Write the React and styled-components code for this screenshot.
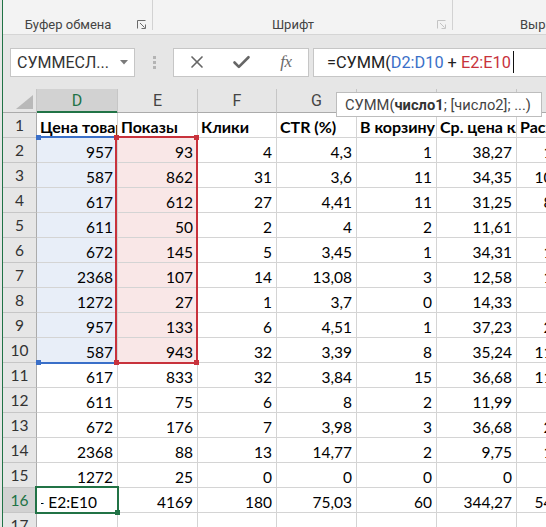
import React from 'react';
import styled, { createGlobalStyle } from 'styled-components';
import { X, Check } from 'lucide-react';

const Global = createGlobalStyle`
  html, body { margin: 0; padding: 0; background: #fff; overflow: hidden; }
  #root { width: 546px; height: 527px; }
`;

const COLS = [34, 81, 80, 79, 80, 80, 80, 80];
const LETTERS = ['D', 'E', 'F', 'G', 'H', 'I', 'J'];
const HEAD = ['Цена товара', 'Показы', 'Клики', 'CTR (%)', 'В корзину', 'Ср. цена клика', 'Расход'];
const DATA = [
  ['957', '93', '4', '4,3', '1', '38,27', '153,08'],
  ['587', '862', '31', '3,6', '11', '34,35', '1064,85'],
  ['617', '612', '27', '4,41', '11', '31,25', '843,75'],
  ['611', '50', '2', '4', '2', '11,61', '23,22'],
  ['672', '145', '5', '3,45', '1', '34,31', '171,55'],
  ['2368', '107', '14', '13,08', '3', '12,58', '176,12'],
  ['1272', '27', '1', '3,7', '0', '14,33', '14,33'],
  ['957', '133', '6', '4,51', '1', '37,23', '223,38'],
  ['587', '943', '32', '3,39', '8', '35,24', '1127,68'],
  ['617', '833', '32', '3,84', '15', '36,68', '1173,76'],
  ['611', '75', '6', '8', '2', '11,99', '71,94'],
  ['672', '176', '7', '3,98', '3', '36,68', '256,76'],
  ['2368', '88', '13', '14,77', '2', '9,75', '126,75'],
  ['1272', '25', '0', '0', '0', '0', '0'],
];
const TOTAL = ['4169', '180', '75,03', '60', '344,27', '5427,17'];

const UI_FONT = `"Roboto", "Noto Sans", sans-serif`;
const CELL_FONT = `"Lato", "Noto Sans", sans-serif`;

const Window = styled.div`
  width: 546px;
  height: 527px;
  overflow: hidden;
  background: #e6e6e6;
  padding-left: 2px;
  box-sizing: border-box;
  display: flex;
`;

const Frame = styled.div`
  flex: 1;
  min-width: 0;
  overflow: hidden;
  border-left: 1px solid #217346;
  display: flex;
  flex-direction: column;
  background: #e6e6e6;
`;

const Ribbon = styled.div`
  height: 35px;
  box-sizing: border-box;
  background: #f3f3f3;
  border-bottom: 1px solid #d5d5d5;
  display: flex;
  flex-shrink: 0;
`;

const Group = styled.div`
  width: ${p => p.$w}px;
  flex-shrink: 0;
  display: flex;
  align-items: flex-end;
  box-sizing: border-box;
  padding-left: ${p => p.$pad || 0}px;
`;

const GroupLabel = styled.div`
  flex: ${p => (p.$free ? '0 0 auto' : 1)};
  text-align: center;
  font: 13px ${UI_FONT};
  color: #444;
  line-height: 18px;
  white-space: nowrap;
`;

const Launcher = styled.svg`
  flex-shrink: 0;
  margin: 0 6px 5px 4px;
`;

const GroupSep = styled.div`
  width: 1px;
  height: 30px;
  background: #d2d2d2;
  flex-shrink: 0;
`;

const FormulaBar = styled.div`
  height: 54px;
  display: flex;
  align-items: center;
  padding-left: 7px;
  flex-shrink: 0;
`;

const Box = styled.div`
  height: 29px;
  box-sizing: border-box;
  background: #fff;
  border: 1px solid #c6c6c6;
  display: flex;
  align-items: center;
  flex-shrink: 0;
`;

const NameBox = styled(Box)`
  width: 125px;
  padding: 0 6px;
  font: 16px ${UI_FONT};
  color: #333;
`;

const NameText = styled.span`
  flex: 1;
  white-space: nowrap;
`;

const Grip = styled.div`
  display: flex;
  flex-direction: column;
  gap: 2px;
  margin: 0 17px 0 18px;
  span {
    width: 3px;
    height: 3px;
    background: #b4b4b4;
  }
`;

const ButtonBox = styled(Box)`
  width: 136px;
  padding-left: 1px;
`;

const IconSlot = styled.div`
  width: 45px;
  display: flex;
  justify-content: center;
  align-items: center;
  color: #666;
`;

const Fx = styled.span`
  font: italic 17px "Liberation Serif", "DejaVu Serif", serif;
  color: #6a6a6a;
  letter-spacing: -0.5px;
`;

const FormulaInput = styled(Box)`
  flex: 1;
  margin-left: 4px;
  margin-right: -20px;
  padding-left: 13px;
  font: 16.3px ${UI_FONT};
  color: #222;
  white-space: nowrap;
`;

const Ref = styled.span`
  color: ${p => p.$c};
`;

const Caret = styled.span`
  width: 1px;
  height: 22px;
  background: #111;
  margin-left: 2px;
`;

const Sheet = styled.div`
  position: relative;
  display: grid;
  grid-template-columns: ${COLS.map(c => c + 'px').join(' ')};
  grid-template-rows: 24px;
  grid-auto-rows: 25px;
  background: #fff;
  flex-shrink: 0;
  width: max-content;
`;

const ColHead = styled.div`
  box-sizing: border-box;
  background: ${p => (p.$active ? '#d2d2d2' : '#e6e6e6')};
  border-right: 1px solid #c6c6c6;
  border-bottom: 1px solid ${p => (p.$active ? '#217346' : '#ababab')};
  box-shadow: ${p => (p.$active ? 'inset 0 -1px 0 #217346' : 'none')};
  display: flex;
  align-items: center;
  justify-content: center;
  font: 16px ${UI_FONT};
  color: ${p => (p.$active ? '#217346' : '#444')};
`;

const Corner = styled(ColHead)`
  align-items: flex-end;
  justify-content: flex-end;
  padding: 0 3px 3px 0;
`;

const RowHead = styled.div`
  box-sizing: border-box;
  background: ${p => (p.$active ? '#d2d2d2' : '#e6e6e6')};
  border-right: 1px solid #ababab;
  border-bottom: 1px solid #c6c6c6;
  display: flex;
  align-items: center;
  justify-content: center;
  font: 15.5px ${CELL_FONT};
  color: ${p => (p.$active ? '#217346' : '#333')};
`;

const TONES = { blue: '#e8eef8', red: '#f9e7e7' };

const Cell = styled.div`
  box-sizing: border-box;
  border-right: 1px solid #d4d4d4;
  border-bottom: 1px solid #d4d4d4;
  background: ${p => TONES[p.$tone] || '#fff'};
  display: flex;
  align-items: flex-end;
  justify-content: ${p => (p.$num ? 'flex-end' : 'flex-start')};
  padding: 0 4px 1px 3px;
  overflow: hidden;
  white-space: nowrap;
  font: ${p => (p.$bold ? 700 : 400)} ${p => (p.$bold ? '16px' : '15.5px')} ${CELL_FONT};
  color: #000;
`;

const EditCell = styled(Cell)`
  padding-left: 4px;
  padding-right: 0;
`;

const EditClip = styled.div`
  flex: 1;
  min-width: 0;
  overflow: hidden;
  display: flex;
  justify-content: flex-end;
  padding-right: 20px;
`;

const RangeBox = styled.div`
  position: absolute;
  left: ${p => p.$x}px;
  top: ${p => p.$y}px;
  width: ${p => p.$w}px;
  height: ${p => p.$h}px;
  box-sizing: border-box;
  border: 2px solid ${p => p.$c};
  ${p => (p.$open ? 'border-left-color: transparent; border-right-color: transparent;' : '')}
  pointer-events: none;
`;

const Handle = styled.div`
  position: absolute;
  left: ${p => p.$x - 2.5}px;
  top: ${p => p.$y - 2.5}px;
  width: 5px;
  height: 5px;
  background: ${p => p.$c};
`;

const Tip = styled.div`
  position: absolute;
  left: 333px;
  top: 3px;
  width: 206px;
  height: 25px;
  box-sizing: border-box;
  background: #fff;
  border: 1px solid #bdbdbd;
  display: flex;
  align-items: center;
  padding-left: 8px;
  font: 14.7px ${UI_FONT};
  color: #444;
  white-space: nowrap;
  b { font-weight: 700; color: #333; }
`;

const LauncherIcon = ({ color }) => (
  <Launcher width="9" height="9" viewBox="0 0 9 9">
    <path d="M0.5 8.5V0.5H8.5" fill="none" stroke={color} strokeWidth="1" />
    <path d="M3 3L7.5 7.5" fill="none" stroke={color} strokeWidth="1" />
    <path d="M8.5 4.5V8.5H4.5" fill="none" stroke={color} strokeWidth="1" />
  </Launcher>
);

const BLUE = '#3a6fc8';
const RED = '#c8323c';

export default function App() {
  const rowsY = r => 24 + (r - 1) * 25;
  return (
    <Window>
      <Global />
      <Frame>
        <Ribbon>
          <Group $w={149}>
            <GroupLabel>Буфер обмена</GroupLabel>
            <LauncherIcon color="#6b6b6b" />
          </Group>
          <GroupSep />
          <Group $w={299}>
            <GroupLabel>Шрифт</GroupLabel>
            <LauncherIcon color="#c4c4c4" />
          </Group>
          <GroupSep />
          <Group $w={100} $pad={67}>
            <GroupLabel $free>Выравнивание</GroupLabel>
          </Group>
        </Ribbon>

        <FormulaBar>
          <NameBox>
            <NameText>СУММЕСЛ...</NameText>
            <svg width="8" height="5" viewBox="0 0 8 5">
              <path d="M0 0H8L4 4.5Z" fill="#7a7a7a" />
            </svg>
          </NameBox>
          <Grip>
            <span />
            <span />
            <span />
          </Grip>
          <ButtonBox>
            <IconSlot>
              <X size={20} strokeWidth={2} />
            </IconSlot>
            <IconSlot>
              <Check size={21} strokeWidth={3} />
            </IconSlot>
            <IconSlot>
              <Fx>fx</Fx>
            </IconSlot>
          </ButtonBox>
          <FormulaInput>
            =СУММ(<Ref $c={BLUE}>D2:D10</Ref>&nbsp;+&nbsp;<Ref $c={RED}>E2:E10</Ref>
            <Caret />
          </FormulaInput>
        </FormulaBar>

        <Sheet>
          <Corner>
            <svg width="17" height="14" viewBox="0 0 17 14">
              <path d="M17 0V14H0Z" fill="#b9b9b9" />
            </svg>
          </Corner>
          {LETTERS.map((l, i) => (
            <ColHead key={l} $active={i === 0}>
              {l}
            </ColHead>
          ))}

          <RowHead>1</RowHead>
          {HEAD.map(h => (
            <Cell key={h} $bold>
              {h}
            </Cell>
          ))}

          {DATA.map((row, ri) => (
            <React.Fragment key={ri}>
              <RowHead>{ri + 2}</RowHead>
              {row.map((v, ci) => (
                <Cell
                  key={ci}
                  $num
                  $tone={ri < 9 ? (ci === 0 ? 'blue' : ci === 1 ? 'red' : undefined) : undefined}
                >
                  {v}
                </Cell>
              ))}
            </React.Fragment>
          ))}

          <RowHead $active>16</RowHead>
          <EditCell>
            <EditClip>=СУММ(D2:D10 + E2:E10</EditClip>
          </EditCell>
          {TOTAL.map((v, i) => (
            <Cell key={i} $num>
              {v}
            </Cell>
          ))}

          <RowHead>17</RowHead>
          {LETTERS.map(l => (
            <Cell key={l} />
          ))}

          <RangeBox $x={34} $y={47} $w={80} $h={228} $c={BLUE} $open />
          <Handle $x={35.5} $y={48} $c={BLUE} />
          <Handle $x={35.5} $y={273.5} $c={BLUE} />
          <RangeBox $x={112} $y={47} $w={83} $h={228} $c={RED} />
          <Handle $x={113.5} $y={48} $c={RED} />
          <Handle $x={193.5} $y={48} $c={RED} />
          <Handle $x={113.5} $y={273.5} $c={RED} />
          <Handle $x={193.5} $y={273.5} $c={RED} />
          <RangeBox $x={32} $y={rowsY(16) - 2} $w={84} $h={28} $c="#217346" />
          <Handle $x={114} $y={rowsY(16) + 24} $c="#217346" />

          <Tip>
            СУММ(<b>число1</b>; [число2]; ...)
          </Tip>
        </Sheet>
      </Frame>
    </Window>
  );
}
